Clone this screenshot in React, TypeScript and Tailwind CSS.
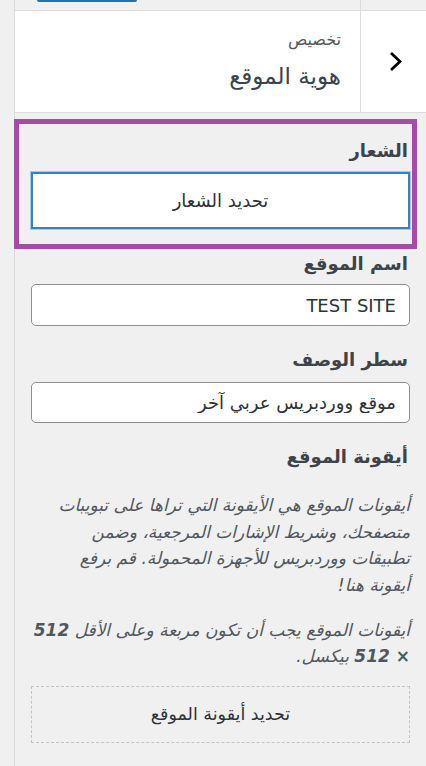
import React from "react";

const font = { fontFamily: '"DejaVu Sans", "Liberation Sans", sans-serif' };

export default function App() {
  return (
    <div className="w-[426px] h-[766px] overflow-hidden bg-[#f0f0f1] flex text-[#3c434a]" style={font}>
      {/* gutter */}
      <div className="w-[14px] shrink-0" />

      {/* customizer panel */}
      <div className="flex-1 min-w-0 flex flex-col border-l border-[#dcdcde]">
        {/* top strip with publish button edge */}
        <div className="h-[10px] flex shrink-0">
          <div className="w-[345px]">
            <div className="ml-[22px] w-[100px] h-[2px] rounded-b-[3px] bg-[#2271b1]" />
          </div>
          <div className="flex-1 border-l border-[#dcdcde]" />
        </div>

        {/* section header */}
        <div className="h-[103px] flex border-y border-[#dcdcde] bg-white shrink-0">
          <div dir="rtl" className="w-[345px] pr-[19px] pt-[18px]">
            <div className="text-[16px] leading-[22px] text-[#50575e]">تخصيص</div>
            <div className="text-[23px] leading-[34px] mt-[8px] text-[#3c434a]">هوية الموقع</div>
          </div>
          <div className="flex-1 border-l border-[#dcdcde] flex items-center justify-center pl-[3px]">
            <svg width="13" height="21" viewBox="0 0 13 21" fill="none">
              <polyline points="2,2 11,10.5 2,19" stroke="#000" strokeWidth="2.8" />
            </svg>
          </div>
        </div>

        {/* logo control (highlighted) */}
        <div className="mt-[6px] -ml-px mr-[9px] border-[5px] border-[#a64ca6] pl-[12px] pr-[2px] pt-[13px] pb-[15px]">
          <div dir="rtl" className="text-[18px] leading-[28px] font-bold pr-[2px]">الشعار</div>
          <button
            dir="rtl"
            className="mt-[7px] w-full h-[57px] bg-white border-2 border-[#3582c4] shadow-[0_0_0_1px_#a9c9e8] text-[18px] text-[#2c3338]"
          >
            تحديد الشعار
          </button>
        </div>

        {/* fields */}
        <div dir="rtl" className="px-[16px] flex flex-col min-w-0">
          <div className="mt-[1px] text-[18px] leading-[28px] font-bold pr-[2px]">اسم الموقع</div>
          <input
            readOnly
            value="TEST SITE"
            className="mt-[6px] h-[42px] w-full bg-white border border-[#8c8f94] rounded-[5px] px-[13px] text-[18px] text-[#2c3338]"
            style={{ fontFamily: '"DejaVu Sans", sans-serif' }}
          />

          <div className="mt-[20px] text-[18px] leading-[28px] font-bold pr-[2px]">سطر الوصف</div>
          <input
            readOnly
            value="موقع ووردبريس عربي آخر"
            className="mt-[8px] h-[41px] w-full bg-white border border-[#8c8f94] rounded-[5px] px-[13px] text-[18px] text-[#2c3338]"
            style={font}
          />

          <div className="mt-[20px] text-[18px] leading-[28px] font-bold pr-[2px]">أيقونة الموقع</div>

          <p className="mt-[21px] text-[17px] leading-[26.5px] italic text-[#50575e]">
            أيقونات الموقع هي الأيقونة التي تراها على تبويبات
            <br />
            متصفحك، وشريط الإشارات المرجعية، وضمن
            <br />
            تطبيقات ووردبريس للأجهزة المحمولة. قم برفع
            <br />
            أيقونة هنا!
          </p>
          <p className="mt-[19px] text-[17px] leading-[26px] italic text-[#50575e]">
            أيقونات الموقع يجب أن تكون مربعة وعلى الأقل <strong className="font-bold">512</strong>
            <br />
            <strong className="font-bold">× 512</strong> بيكسل.
          </p>

          <button
            className="mt-[17px] h-[57px] w-full border border-dashed border-[#c3c4c7] text-[17.5px] text-[#2c3338]"
          >
            تحديد أيقونة الموقع
          </button>
        </div>
      </div>
    </div>
  );
}
